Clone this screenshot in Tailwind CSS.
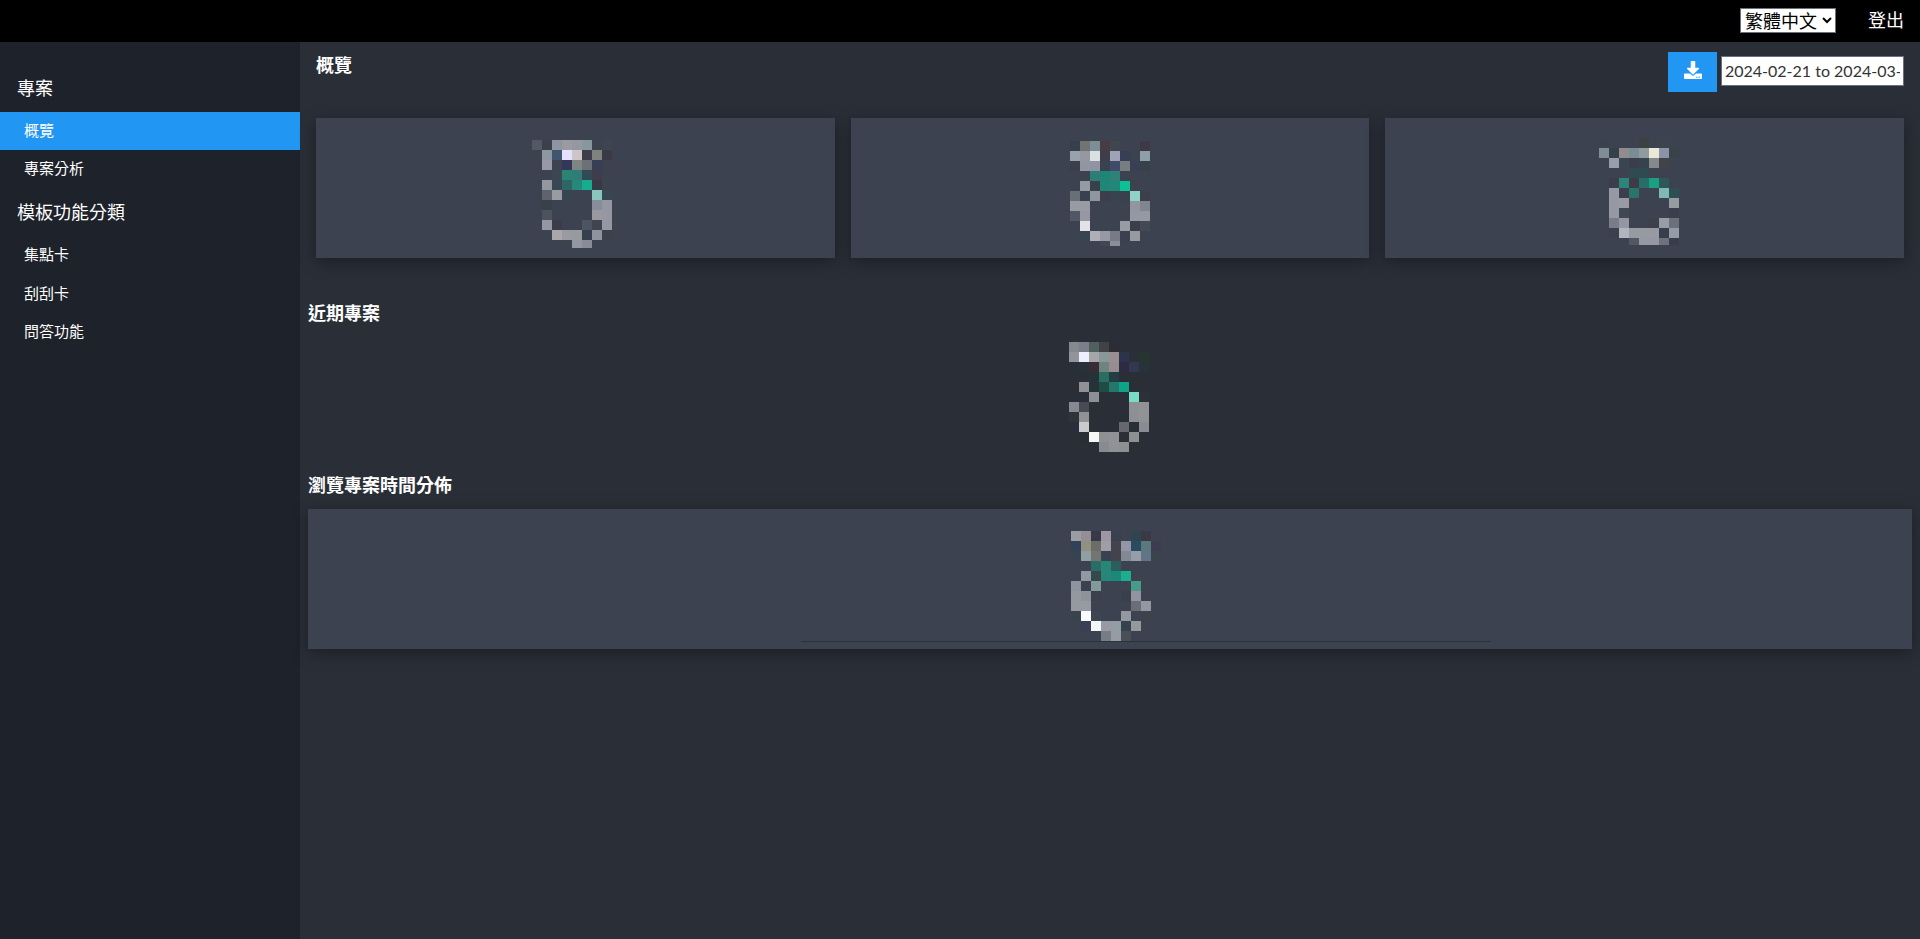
<!doctype html>
<html lang="zh-Hant">

<head>
    <meta charset="UTF-8">
    <meta name="viewport" content="width=device-width, initial-scale=1.0">
    <title>概覽</title>
    <script src="https://cdn.jsdelivr.net/npm/@tailwindcss/browser@4"></script>
</head>

<body class="flex min-h-screen flex-col bg-[#2a2e37] font-[Lato,'Noto_Sans_CJK_TC',sans-serif] text-[18px] leading-7 text-white">
    <header class="flex h-[42px] items-center justify-end gap-8 bg-black px-4 pb-[2px]">
        <label for="language" class="sr-only">語言</label>
        <select id="language" name="language"
            class="h-[25px] w-24 appearance-auto border border-gray-500 bg-white text-[18px] leading-5 text-black">
            <option>繁體中文</option>
            <option>English</option>
        </select>
        <a href="#">登出</a>
    </header>

    <div class="flex grow">
        <nav class="w-[300px] shrink-0 bg-[#1e222a] pt-[22px]">
            <h2 class="flex h-12 items-center px-[17px]">專案</h2>
            <ul class="text-[15px]">
                <li><a href="#" class="flex h-[38px] items-center bg-[#2196f3] px-6 pb-[2px]">概覽</a></li>
                <li><a href="#" class="flex h-[38px] items-center px-6 pb-[2px]">專案分析</a></li>
            </ul>
            <h2 class="flex h-12 items-center px-[17px]">模板功能分類</h2>
            <ul class="text-[15px]">
                <li><a href="#" class="flex h-[38px] items-center px-6 pb-[2px]">集點卡</a></li>
                <li><a href="#" class="flex h-[38px] items-center px-6">刮刮卡</a></li>
                <li><a href="#" class="flex h-[38px] items-center px-6">問答功能</a></li>
            </ul>
        </nav>

        <main class="min-w-0 grow px-2 pt-[10px]">
            <div class="flex items-start justify-between px-2">
                <h1 class="leading-[26px] font-bold">概覽</h1>
                <div class="flex items-start gap-1">
                    <button type="button" aria-label="下載"
                        class="flex h-10 w-[49px] items-center justify-center bg-[#2196f3] pb-1">
                        <svg class="h-[18px] w-[18px]" viewBox="0 0 512 512" fill="#fff">
                            <path
                                d="M216 0h80c13.300 0 24 10.700 24 24v168h87.700c17.800 0 26.700 21.500 14.100 34.100L269.700 378.300c-7.500 7.500-19.800 7.500-27.300 0L90.100 226.100c-12.600-12.600-3.700-34.100 14.100-34.100H192V24c0-13.300 10.700-24 24-24zm296 376v112c0 13.300-10.700 24-24 24H24c-13.300 0-24-10.700-24-24V376c0-13.300 10.700-24 24-24h146.700l49 49c20.100 20.100 52.500 20.100 72.600 0l49-49H488c13.300 0 24 10.700 24 24zm-124 88c0-11-9-20-20-20s-20 9-20 20 9 20 20 20 20-9 20-20zm64 0c0-11-9-20-20-20s-20 9-20 20 9 20 20 20 20-9 20-20z" />
                        </svg>
                    </button>
                    <label for="range" class="sr-only">日期</label>
                    <input type="text" id="range" name="range" value="2024-02-21 to 2024-03-21"
                        class="mt-1 h-[30px] w-[183px] border border-gray-500 bg-white px-[3px] pb-[2px] text-[16px] text-[#333]">
                </div>
            </div>

            <div class="mt-[26px] grid grid-cols-3 gap-4 px-2">
                <div class="flex justify-center bg-[#3c424f] py-[10px] shadow-[0_4px_16px_rgba(0,0,0,0.35)]">
                    <svg class="h-[120px] w-[120px]" data-loader="0" shape-rendering="crispEdges"></svg>
                </div>
                <div class="flex justify-center bg-[#3c424f] py-[10px] shadow-[0_4px_16px_rgba(0,0,0,0.35)]">
                    <svg class="h-[120px] w-[120px]" data-loader="1" shape-rendering="crispEdges"></svg>
                </div>
                <div class="flex justify-center bg-[#3c424f] py-[10px] shadow-[0_4px_16px_rgba(0,0,0,0.35)]">
                    <svg class="h-[120px] w-[120px]" data-loader="2" shape-rendering="crispEdges"></svg>
                </div>
            </div>

            <h2 class="mt-[41px] font-bold">近期專案</h2>
            <div class="mt-[5px] flex justify-center">
                <svg class="h-[120px] w-[120px]" data-loader="3" shape-rendering="crispEdges"></svg>
            </div>

            <h2 class="mt-[19px] font-bold">瀏覽專案時間分佈</h2>
            <div class="mt-[10px] bg-[#3c424f] pt-[10px] pb-[7px] shadow-[0_4px_16px_rgba(0,0,0,0.35)]">
                <div class="flex justify-center">
                    <svg class="h-[122px] w-[120px]" data-loader="4" shape-rendering="crispEdges"></svg>
                </div>
                <hr class="ml-[493px] w-[43%] border-[#2c313b]">
            </div>
        </main>
    </div>

    <script>
        // Each loader is a grid of 10px blocks, "." is an empty block
        const loaders = [
            {
                x: 17, y: 12, last: 8, rows: [
                    '545862 3c404b 8f94a4 999b9f 9698a1 87979e . 3c4550',
                    '. 8c97a2 40566c e5e0ff cdc5c8 3e3e4a 7e8380 3a3946',
                    '. 9799a6 . 35375a 7f8583 6b7174 393e57 3d424e',
                    '. . 3a4753 2b8473 2f7d77 334a56 3f3d4b',
                    '. 93989f 384753 2f6565 26877a 17ac8c 373946',
                    '. 5e646c 999ba2 364550 . . 89c7be 374650',
                    '. 3a404a . . . . 888d9b 9498a2',
                    '. 4c535b . . . . 999aa0 9597a3',
                    '. 9597a5 3b3c4a . . 4e5562 40444f 9597a3',
                    '. . aaa6aa 9a9aa2 989b9e 36404d 8d949e 3c404b',
                    '. . . 3a434e 9597a0 878c96'
                ]
            },
            {
                x: 20, y: 13, last: 5, rows: [
                    '36404c 727474 7e8e97 463c42 3f464d . . 3d3946',
                    '99a1ad 9797a4 dae1e0 3e3d4b a0a2b5 373f57 . 8e9fa9',
                    '3a404a 9096a2 8f93a5 3a424f 404a6b 777e80 3b3f54 36414b',
                    '. . 2e7e76 1f8577 2f8276',
                    '. 959ba3 3a3f4c 1e8778 22867a 0cc196 3d424e',
                    '696e78 394150 8f969f 3e3d4a 38434f 3a404c 91d2c8 3b404b',
                    '999ba3 999ba3 . . . . 9395a0 808590',
                    '535763 9597a2 . . . . 9498a2 9599a4',
                    '. e3e2e9 . . . 989ba2 3b3f4b 444a54',
                    '. 384451 aeb0b6 979aa4 777b87 3a404d 979b9f',
                    '. . . 414852 8a8e98'
                ]
            },
            {
                x: 14, y: 10, last: 7, rows: [
                    '3a424d 3b434e 3c424f . 3e4141 3c424e 3b4550',
                    '808d95 36404a 918d8d 798d95 909b9d ece8d8 8b93a7 394245',
                    '. 97a0aa 3b4453 3b3e4a 34434f 858989 42424a',
                    '. . . 2f4a50 304b50',
                    '. 3b3e4a 2d8478 3d3b48 286d67 1b9f83 2f5658',
                    '. 9699a4 3a3f4b 2c7368 . . 82b8b3 2c4f54',
                    '. 9699a4 999ba3 . . . . 999ba3',
                    '. 9699a4 414853 . . . . 3a3f4d',
                    '. 787d88 9496a1 . . 3a404c 989ca4 6b707a',
                    '. 3a404c b1b5be 979aa0 979aa3 979aa3 373f4e 959ba7',
                    '. . 3b434e 515861 9698a3 9598a2 6d727c 373e49'
                ]
            },
            {
                x: 19, y: 10, last: 10, rows: [
                    '868890 7c7e8c 505f60 424145 2a2e34 . . .',
                    '92949b efeeff a4a6a7 87979a 998f92 2c334b 2a2f38 26352f',
                    '. 283038 372c37 6f837f 978d91 2d2b42 32384f 283238',
                    '. . 253338 2a6e61 213f43',
                    '. 8f9196 253338 1e4c47 24776a 0ca687',
                    '. . 8d9096 . . . 79dcc7 2d3039',
                    '858991 484b52 . . . . 8e9094 909295',
                    '303338 909294 . . . . 8d8f94 909295',
                    '292f3a c9cacd . . . 66686f 2a2f36 898d93',
                    '. 292d34 f6f7f6 8e9093 909295 2c2f34 8e9092',
                    '. . . 888c90 909295 8d9092'
                ]
            },
            {
                x: 21, y: 12, last: 10, rows: [
                    '9c9ca5 938f94 393849 9b97a5 3a404e . 2e464f 3a3944',
                    '30425a 91917f 6c6d66 a09da9 43434d 9496a6 2b4b60 5b797c 3e3c50',
                    '384350 919ea3 727573 37434f 43434d 838994 969ca8 61748a 3b434d',
                    '. . 2b6c67 278676 2d5e5e',
                    '. 8f9ba0 36474f 27867a 1b897a 1caf8f',
                    '8f959e 3b414f 83999a . . . 499b89',
                    '96989f 8e929c 3b404c . . 3a3f4d 92959f',
                    '9698a2 979aa1 . . . . 696e78 9297a2',
                    '3a424c f8fafb 3e4450 . . 94989f . 3f424c',
                    '. 3a4053 f2f5f5 979aa2 949ca4 36414e 94999c',
                    '. . . 787c87 979ba4 484f57'
                ]
            }
        ];

        document.querySelectorAll('[data-loader]').forEach(svg => {
            const loader = loaders[svg.dataset.loader];
            loader.rows.forEach((row, r) => {
                row.split(' ').forEach((color, c) => {
                    if (color === '.') return;
                    const rect = document.createElementNS('http://www.w3.org/2000/svg', 'rect');
                    rect.setAttribute('x', loader.x + c * 10);
                    rect.setAttribute('y', loader.y + r * 10);
                    rect.setAttribute('width', 10);
                    rect.setAttribute('height', r === 10 ? loader.last : 10);
                    rect.setAttribute('fill', '#' + color);
                    svg.appendChild(rect);
                });
            });
        });
    </script>
</body>

</html>
